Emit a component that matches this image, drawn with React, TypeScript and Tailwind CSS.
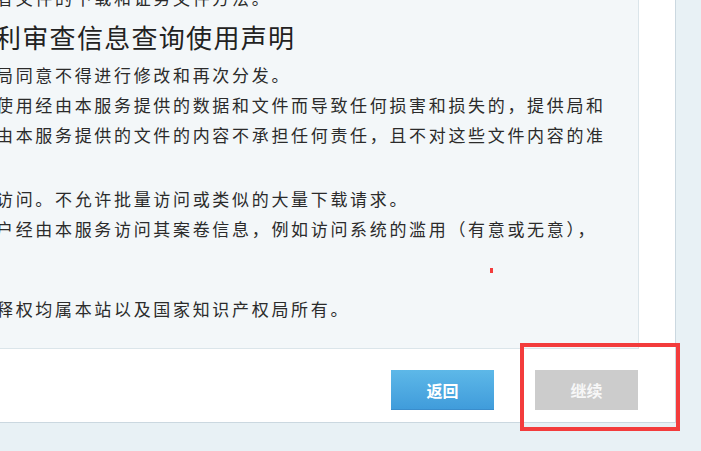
import React from 'react';

const paragraphs = {
    intro: ['局同意不得进行修改和再次分发。', '使用经由本服务提供的数据和文件而导致任何损害和损失的，提供局和', '由本服务提供的文件的内容不承担任何责任，且不对这些文件内容的准'],
    access: ['访问。不允许批量访问或类似的大量下载请求。', '户经由本服务访问其案卷信息，例如访问系统的滥用（有意或无意），'],
    rights: ['释权均属本站以及国家知识产权局所有。'],
};

function Lines({ lines }: { lines: string[] }) {
    return (
        <>
            {lines.map((line) => (
                <p key={line} className="whitespace-nowrap">{line}</p>
            ))}
        </>
    );
}

export default function App() {
    return (
        <div className="relative w-[701px] h-[451px] overflow-hidden bg-[#e8f1f5] font-['Liberation_Serif','Noto_Sans_CJK_SC',serif]">
            {/* White dialog */}
            <div className="w-[676px] h-[423px] bg-white border-r border-b border-[#cbd8e0] pr-[36px] flex flex-col">
                {/* Statement panel */}
                <div className="h-[349px] shrink-0 bg-[#f3f7f9] border-r border-b border-[#dbe5ea] overflow-hidden">
                    <div className="-ml-[4px] -mt-[15px] text-[17px] leading-[30px] tracking-[2.67px] text-[#2b2b2b]">
                        <p className="whitespace-nowrap">者文件的下载和证务文件方法。</p>
                        <h1 className="mt-[7px] -ml-[1px] text-[26px] leading-[36px] tracking-[1.3px] text-[#222] font-normal whitespace-nowrap">
                            利审查信息查询使用声明
                        </h1>
                        <div className="mt-[4px]">
                            <Lines lines={paragraphs.intro} />
                        </div>
                        <div className="mt-[34px]">
                            <Lines lines={paragraphs.access} />
                        </div>
                        <div className="mt-[50px]">
                            <Lines lines={paragraphs.rights} />
                        </div>
                    </div>
                </div>

                {/* Actions */}
                <div className="flex justify-end gap-[41px] pt-[21px] pr-[1px] font-['Noto_Sans_CJK_SC',sans-serif]">
                    <button className="w-[103px] h-[40px] bg-gradient-to-b from-[#5db8e8] to-[#409cdb] border-b border-[#3a8dcc] text-white text-[16px] font-bold">
                        返回
                    </button>
                    <button className="w-[103px] h-[40px] bg-[#cccccc] text-[#f7f7f7] text-[16px] font-bold" disabled>
                        继续
                    </button>
                </div>
            </div>

            {/* Annotation overlays */}
            <div className="absolute left-[490px] top-[268px] w-[3px] h-[5px] bg-[#f33c3c]" />
            <div className="absolute left-[520px] top-[343px] w-[160px] h-[88px] border-4 border-[#f33c3c]" />
        </div>
    );
}
